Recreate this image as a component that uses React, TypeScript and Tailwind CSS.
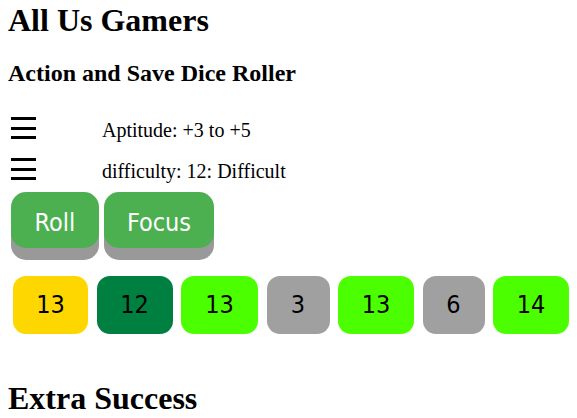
import React from "react";

function Burger() {
  return (
    <div className="ml-[3px] flex w-[25px] flex-col gap-[6.5px]">
      <div className="h-[3px] w-[25px] bg-black" />
      <div className="h-[3px] w-[25px] bg-black" />
      <div className="h-[3px] w-[25px] bg-black" />
    </div>
  );
}

const dice: { v: string; bg: string; w: string }[] = [
  { v: "13", bg: "bg-[#ffd700]", w: "w-[75px]" },
  { v: "12", bg: "bg-[#008040]", w: "w-[76px]" },
  { v: "13", bg: "bg-[#4cff00]", w: "w-[77px]" },
  { v: "3", bg: "bg-[#a0a0a0]", w: "w-[63px]" },
  { v: "13", bg: "bg-[#4cff00]", w: "w-[76px]" },
  { v: "6", bg: "bg-[#a0a0a0]", w: "w-[62px]" },
  { v: "14", bg: "bg-[#4cff00]", w: "w-[76px]" },
];

export default function App() {
  return (
    <div className="min-h-[418px] bg-white pl-2 font-['Liberation_Serif',serif] text-black">
      <h1 className="mt-[2px] h-[37px] text-[32px] font-bold leading-[normal]">All Us Gamers</h1>
      <h2 className="mt-[21px] h-[28px] text-[24px] font-bold leading-[normal]">Action and Save Dice Roller</h2>
      <div className="mt-[29px] flex h-[41px] items-start">
        <Burger />
        <div className="ml-[66px] mt-[2px] text-[20px] leading-[normal]">Aptitude: +3 to +5</div>
      </div>
      <div className="flex h-[34px] items-start">
        <Burger />
        <div className="ml-[66px] mt-[2px] text-[20px] leading-[normal]">difficulty: 12: Difficult</div>
      </div>
      <div className="ml-[3px] flex gap-[5px] font-['DejaVu_Sans_Condensed','DejaVu_Sans',sans-serif] text-[25px] text-white">
        <div className="flex h-[56px] w-[88px] items-center justify-center rounded-[15px] bg-[#4caf50] pt-[5px] shadow-[0_12px_0_#999]">Roll</div>
        <div className="flex h-[56px] w-[110px] items-center justify-center rounded-[15px] bg-[#4caf50] pt-[5px] shadow-[0_12px_0_#999]">Focus</div>
      </div>
      <div className="ml-[5px] mt-[28px] flex gap-[8.5px] font-['DejaVu_Sans_Condensed','DejaVu_Sans',sans-serif] text-[25px] text-black">
        {dice.map((d, i) => (
          <div key={i} className={`flex h-[58px] items-center justify-center rounded-[13px] ${d.w} ${d.bg}`}>
            {d.v}
          </div>
        ))}
      </div>
      <h1 className="mt-[46px] h-[37px] text-[32px] font-bold leading-[normal]">Extra Success</h1>
    </div>
  );
}
